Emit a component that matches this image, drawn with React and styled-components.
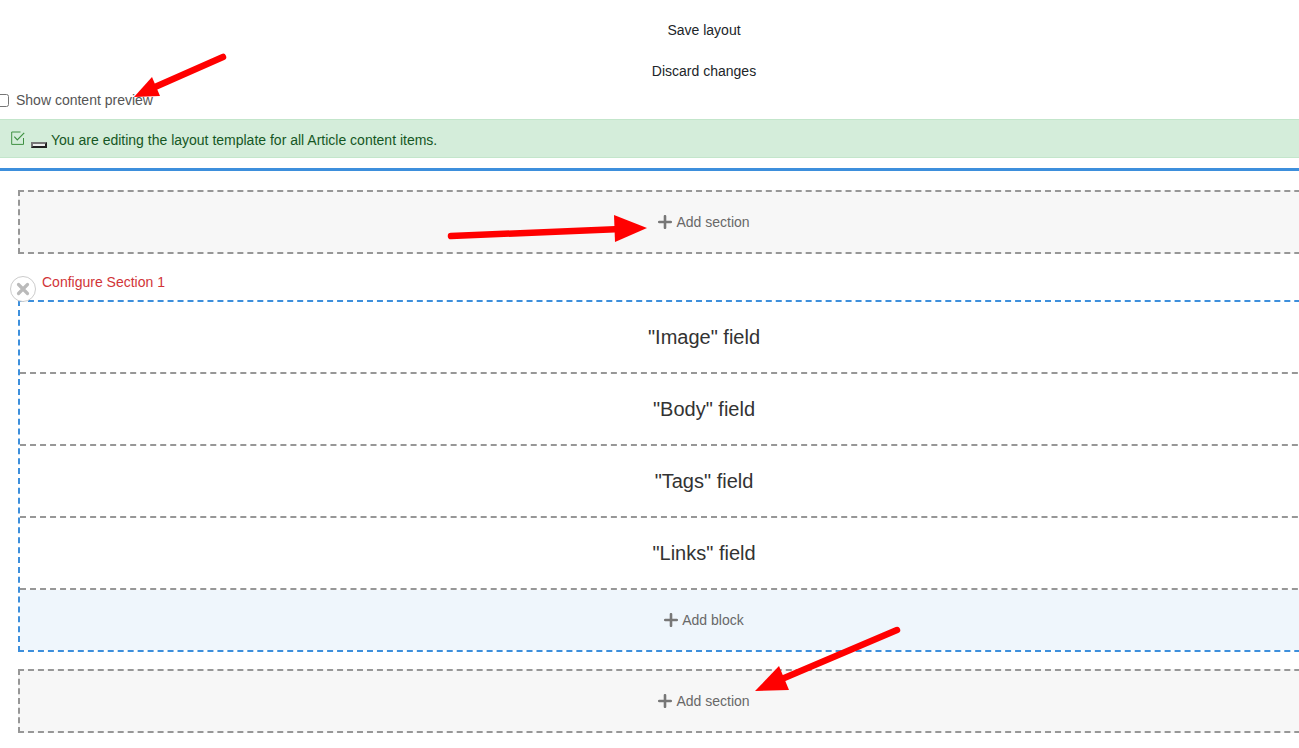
import React from "react";
import styled, { createGlobalStyle, css } from "styled-components";

const GlobalStyle = createGlobalStyle`
  *, *::before, *::after { box-sizing: border-box; }
  body {
    margin: 0;
    background: #fff;
    color: #333;
    font: 14px/20px "Liberation Sans", Arial, sans-serif;
    overflow-x: hidden;
  }
`;

const Viewport = styled.div`
  position: relative;
  overflow: hidden;
`;

/* The layout form runs past the right edge of the window. */
const Page = styled.form`
  width: calc(100% + 109px);
  padding: 9px 0 15px;
`;

const Actions = styled.div`
  display: flex;
  flex-direction: column;
  margin-bottom: 1px;
`;

const ActionButton = styled.button`
  height: 41px;
  padding: 0;
  border: 0;
  background: transparent;
  color: #212529;
  font: inherit;
  cursor: pointer;
`;

const PreviewToggle = styled.label`
  display: flex;
  align-items: center;
  gap: 7px;
  height: 16px;
  margin-bottom: 11px;
  color: #555;
`;

const Checkbox = styled.input`
  width: 13px;
  height: 13px;
  margin: 0 0 0 -4px;
`;

const Alert = styled.div`
  display: flex;
  align-items: center;
  height: 39px;
  padding: 2px 11px 0;
  border: solid #c3e6cb;
  border-width: 1px 0;
  background: #d4edda;
  color: #155724;

  svg {
    margin-bottom: 4px;
  }
`;

const DismissButton = styled.button`
  width: 16px;
  height: 6px;
  margin: 10px 4px 0 6px;
  padding: 0;
  border: 2px solid;
  border-color: #767676 #222 #222 #767676;
  background: #efefef;
`;

const Builder = styled.div`
  margin-top: 10px;
  padding: 19px 18px 0;
  border-top: 3px solid #3d8fdc;
`;

const addArea = css`
  display: flex;
  align-items: center;
  justify-content: center;
  height: 60px;
`;

const AddSection = styled.div`
  ${addArea}
  box-sizing: content-box;
  border: 2px dashed #979797;
  background: #f7f7f7;
`;

const AddBlock = styled.div`
  ${addArea}
  background: #eff6fc;
`;

const AddLink = styled.a`
  display: flex;
  align-items: center;
  gap: 4px;
  color: #686868;
  text-decoration: none;
`;

const SectionHeader = styled.div`
  display: flex;
  gap: 6px;
  height: 46px;
  padding-top: 18px;
  margin-left: -8px;
`;

const RemoveLink = styled.a`
  position: relative;
  z-index: 1;
  display: flex;
  flex: none;
  align-items: center;
  justify-content: center;
  width: 26px;
  height: 26px;
  margin-top: 4px;
  border: 1px solid #ccc;
  border-radius: 50%;
  background: #fff;
`;

const ConfigureLink = styled.a`
  align-self: flex-start;
  color: #d13438;
  text-decoration: none;
`;

const Section = styled.section`
  margin-bottom: 17px;
  border: 2px dashed #3d8fdc;
`;

const Block = styled.div`
  display: flex;
  align-items: center;
  justify-content: center;
  height: 72px;
  border-bottom: 2px dashed #979797;
  font-size: 20px;
  line-height: 24px;
`;

const ArrowLayer = styled.svg`
  position: absolute;
  top: 0;
  left: 0;
  z-index: 2;
  pointer-events: none;
  overflow: visible;
`;

function Plus() {
  return (
    <svg width="14" height="14" viewBox="0 0 14 14" aria-hidden="true">
      <path d="M7 1.2V12.8M1.2 7H12.8" stroke="#777" strokeWidth="2.6" strokeLinecap="round" />
    </svg>
  );
}

function CheckSquare() {
  return (
    <svg width="14" height="14" viewBox="0 0 14 14" fill="none" stroke="#3f9142" aria-hidden="true">
      <path d="M9.5 1H.7V13.4H12.5V7" />
      <path d="M3.3 5.6L6.3 8.8L13.2 1.8" strokeWidth="1.2" />
    </svg>
  );
}

function Cross() {
  return (
    <svg width="14" height="14" viewBox="0 0 14 14" aria-hidden="true">
      <path d="M2.5 2.5L11.5 11.5M11.5 2.5L2.5 11.5" stroke="#bababa" strokeWidth="3.2" strokeLinecap="round" />
    </svg>
  );
}

function Add({ children }) {
  return (
    <AddLink href="#add">
      <Plus />
      {children}
    </AddLink>
  );
}

function Arrows() {
  return (
    <ArrowLayer width="900" height="700" fill="#f00" stroke="#f00" aria-hidden="true">
      <g strokeWidth="6.5" strokeLinecap="round">
        <path d="M223 57L155 87" />
        <path d="M451 236L615 229.3" />
        <path d="M897 630L783 678.5" />
      </g>
      <g stroke="none">
        <path d="M134 97L152 77L160 96Z" />
        <path d="M647 228L614 215L615 242Z" />
        <path d="M755 691L779 666L789 690Z" />
      </g>
    </ArrowLayer>
  );
}

const fields = ["Image", "Body", "Tags", "Links"];

export default function App() {
  return (
    <Viewport>
      <GlobalStyle />
      <Page>
        <Actions>
          <ActionButton type="button">Save layout</ActionButton>
          <ActionButton type="button">Discard changes</ActionButton>
        </Actions>
        <PreviewToggle>
          <Checkbox type="checkbox" />
          Show content preview
        </PreviewToggle>
        <Alert role="status">
          <CheckSquare />
          <DismissButton type="button" aria-label="Close" />
          You are editing the layout template for all Article content items.
        </Alert>
        <Builder>
          <AddSection>
            <Add>Add section</Add>
          </AddSection>
          <SectionHeader>
            <RemoveLink href="#remove" aria-label="Remove Section 1">
              <Cross />
            </RemoveLink>
            <ConfigureLink href="#configure">Configure Section 1</ConfigureLink>
          </SectionHeader>
          <Section aria-label="Section 1">
            {fields.map((name) => (
              <Block key={name}>"{name}" field</Block>
            ))}
            <AddBlock>
              <Add>Add block</Add>
            </AddBlock>
          </Section>
          <AddSection>
            <Add>Add section</Add>
          </AddSection>
        </Builder>
      </Page>
      <Arrows />
    </Viewport>
  );
}
